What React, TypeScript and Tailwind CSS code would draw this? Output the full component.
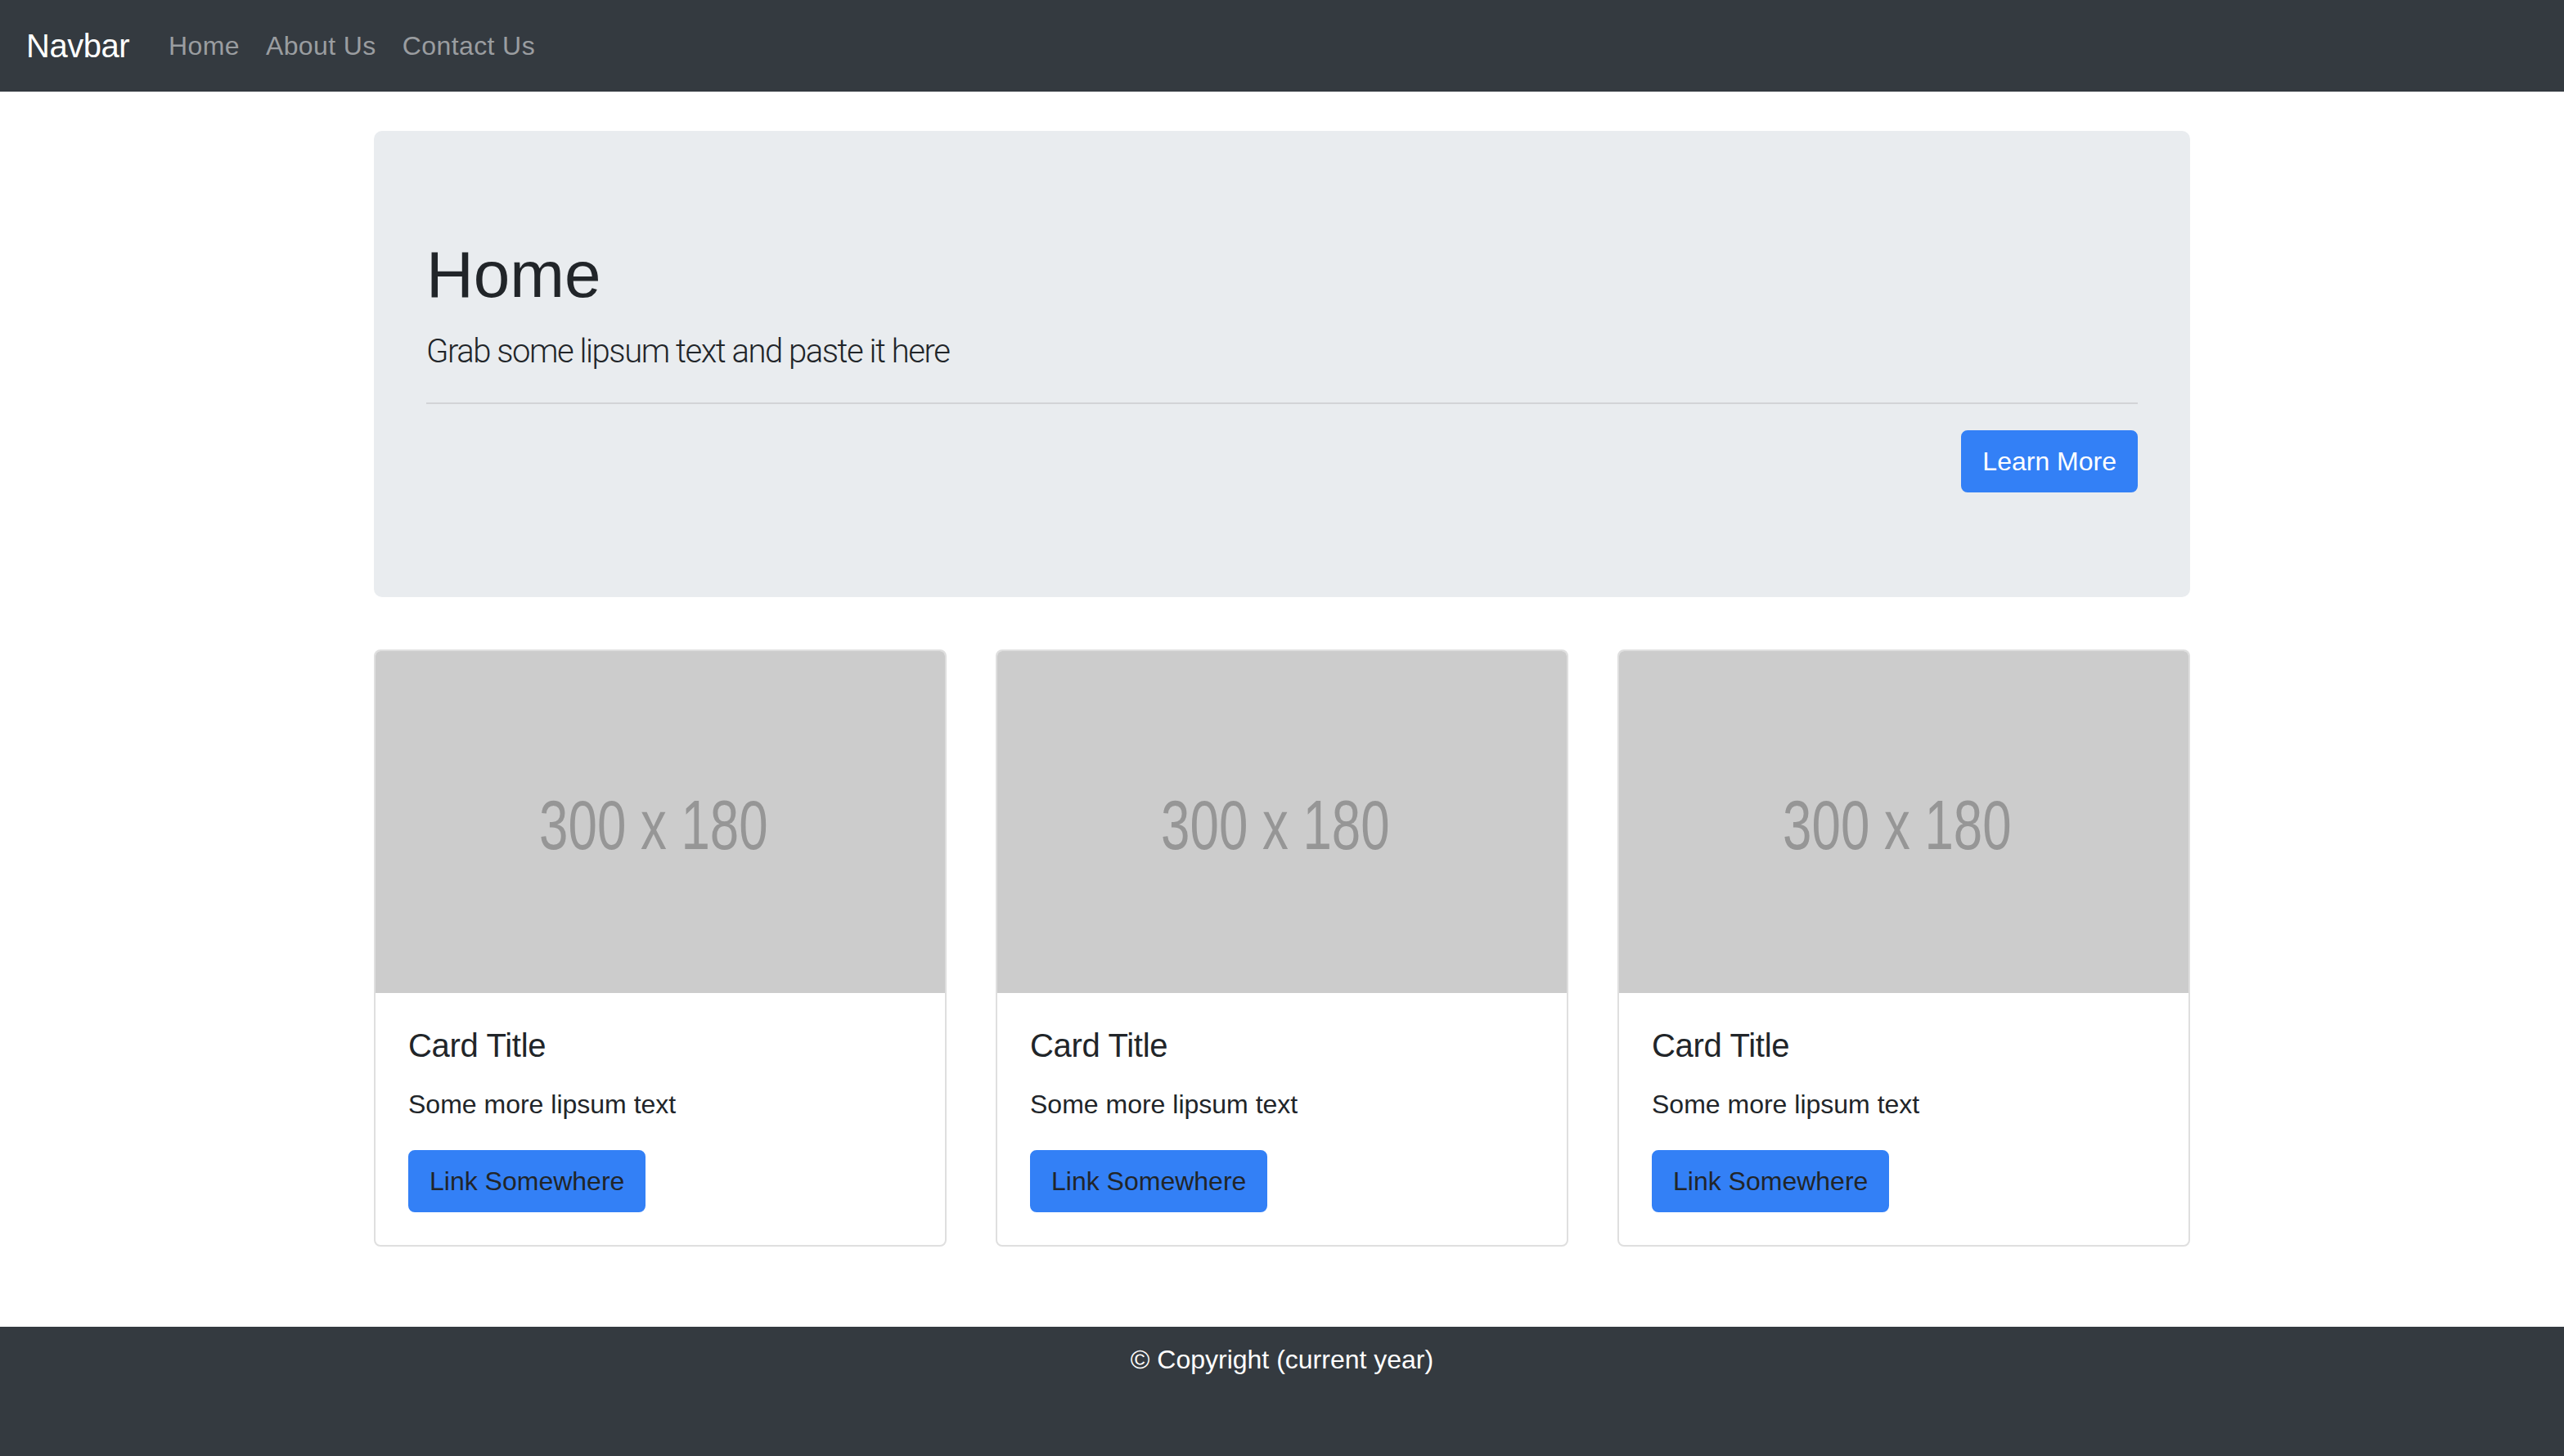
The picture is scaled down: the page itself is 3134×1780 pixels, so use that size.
import React from 'react';

const cards = [1, 2, 3];

const Card: React.FC = () => (
  <div className="flex flex-col border-2 border-[#dfdfdf] rounded-[8px] overflow-hidden bg-white">
    <div className="h-[418px] bg-[#cccccc] flex items-center justify-center overflow-hidden">
      <span className="text-[86px] leading-none text-[#969696] scale-x-[0.74] whitespace-nowrap mr-[16px] mt-[6px]">300 x 180</span>
    </div>
    <div className="p-[40px]">
      <h5 className="text-[40px] leading-[1.2] font-medium text-[#212529] mb-[24px] tracking-[-0.3px]">Card Title</h5>
      <p className="text-[32px] leading-[1.5] text-[#212529] mb-[32px]">Some more lipsum text</p>
      <a href="#" className="inline-block bg-[#3380f6] text-[#212529] text-[32px] leading-[1.5] px-[24px] py-[12px] border-2 border-[#3380f6] rounded-[8px]">
        Link Somewhere
      </a>
    </div>
  </div>
);

const App: React.FC = () => {
  return (
    <div className="min-h-screen flex flex-col bg-white font-['Liberation_Sans',Arial,sans-serif] text-[#212529]">
      <nav className="h-[112px] bg-[#343a40] flex items-center px-[32px]">
        <a href="#" className="text-[40px] leading-[1.5] text-white mr-[32px] tracking-[-0.5px]">Navbar</a>
        <ul className="flex items-center">
          {['Home', 'About Us', 'Contact Us'].map((item) => (
            <li key={item}>
              <a href="#" className="block px-[16px] text-[32px] leading-[1.5] text-[#9a9da0] tracking-[0.4px]">{item}</a>
            </li>
          ))}
        </ul>
      </nav>

      <main className="w-[2220px] mx-auto">
        <div className="mt-[48px] mb-[64px] bg-[#e9ecef] rounded-[10px] px-[64px] py-[128px]">
          <h1 className="text-[80px] leading-[1.2] font-medium text-[#212529] mb-[16px]">Home</h1>
          <p className="text-[40px] leading-[1.5] font-light font-['Roboto',sans-serif] tracking-[-1.45px] text-[#212529] mb-[32px]">Grab some lipsum text and paste it here</p>
          <hr className="border-0 border-t-2 border-[#d2d4d7] mb-[32px]" />
          <div className="flex justify-end">
            <a href="#" className="inline-block bg-[#3380f6] text-white text-[32px] leading-[1.5] px-[24px] py-[12px] border-2 border-[#3380f6] rounded-[8px]">
              Learn More
            </a>
          </div>
        </div>

        <div className="grid grid-cols-3 gap-[60px] mb-[98px]">
          {cards.map((c) => (
            <Card key={c} />
          ))}
        </div>
      </main>

      <footer className="flex-1 bg-[#343a40] pt-[16px] pb-[94px] text-center">
        <p className="text-[32px] leading-[1.5] text-white">© Copyright (current year)</p>
      </footer>
    </div>
  );
};

export default App;
